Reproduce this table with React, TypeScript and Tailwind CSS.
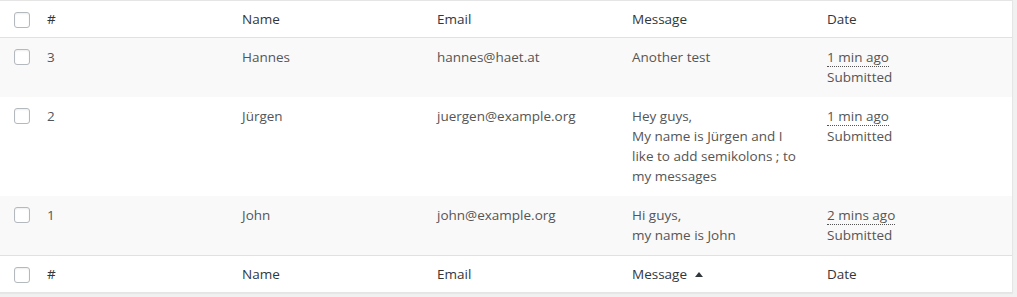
import React from 'react'

type Entry = {
  id: number
  name: string
  email: string
  message: string[]
  date: string
}

const entries: Entry[] = [
  { id: 3, name: 'Hannes', email: 'hannes@haet.at', message: ['Another test'], date: '1 min ago' },
  {
    id: 2,
    name: 'Jürgen',
    email: 'juergen@example.org',
    message: ['Hey guys,', 'My name is Jürgen and I', 'like to add semikolons ; to', 'my messages'],
    date: '1 min ago',
  },
  { id: 1, name: 'John', email: 'john@example.org', message: ['Hi guys,', 'my name is John'], date: '2 mins ago' },
]

const grid = 'grid grid-cols-[37px_195px_195px_195px_195px_195px]'

const Checkbox = () => (
  <div className="ml-[14px] h-4 w-4 rounded-[3px] border border-[#b4b9be] bg-white shadow-[inset_0_1px_2px_rgba(0,0,0,0.07)]" />
)

const HeadRow = ({ sorted, className }: { sorted?: boolean; className: string }) => (
  <div className={`${grid} bg-white text-[#32373c] ${className}`}>
    <div className="pt-[11px]">
      <Checkbox />
    </div>
    <div className="px-[10px] py-2">#</div>
    <div className="px-[10px] py-2">Name</div>
    <div className="px-[10px] py-2">Email</div>
    <div className="flex items-center px-[10px] py-2">
      Message
      {sorted && (
        <svg className="ml-[8px] mt-[1px]" width="8" height="5" viewBox="0 0 8 5">
          <path d="M0 5 L4 0 L8 5 Z" fill="#32373c" />
        </svg>
      )}
    </div>
    <div className="px-[10px] py-2">Date</div>
  </div>
)

export default function App() {
  return (
    <div
      className="h-[297px] w-full overflow-hidden bg-[#f1f1f1] text-[13.5px] leading-5"
      style={{ fontFamily: '"Open Sans", "Liberation Sans", sans-serif' }}
    >
      <div className="w-[1013px] border-y border-r border-[#e5e5e5] bg-white shadow-[0_1px_1px_rgba(0,0,0,0.04)]">
        <HeadRow className="border-b border-[#e1e1e1]" />
        {entries.map((e, i) => (
          <div key={e.id} className={`${grid} text-[#555] ${i % 2 === 0 ? 'bg-[#f9f9f9]' : 'bg-white'}`}>
            <div className="pt-[11px]">
              <Checkbox />
            </div>
            <div className="px-[10px] pb-[10px] pt-[9px]">{e.id}</div>
            <div className="px-[10px] pb-[10px] pt-[9px]">{e.name}</div>
            <div className="px-[10px] pb-[10px] pt-[9px]">{e.email}</div>
            <div className="px-[10px] pb-[10px] pt-[9px]">
              {e.message.map((line) => (
                <div key={line}>{line}</div>
              ))}
            </div>
            <div className="px-[10px] pb-[10px] pt-[9px]">
              <span className="border-b border-dotted border-[#555]">{e.date}</span>
              <div>Submitted</div>
            </div>
          </div>
        ))}
        <HeadRow sorted className="border-t border-[#e1e1e1]" />
      </div>
    </div>
  )
}
